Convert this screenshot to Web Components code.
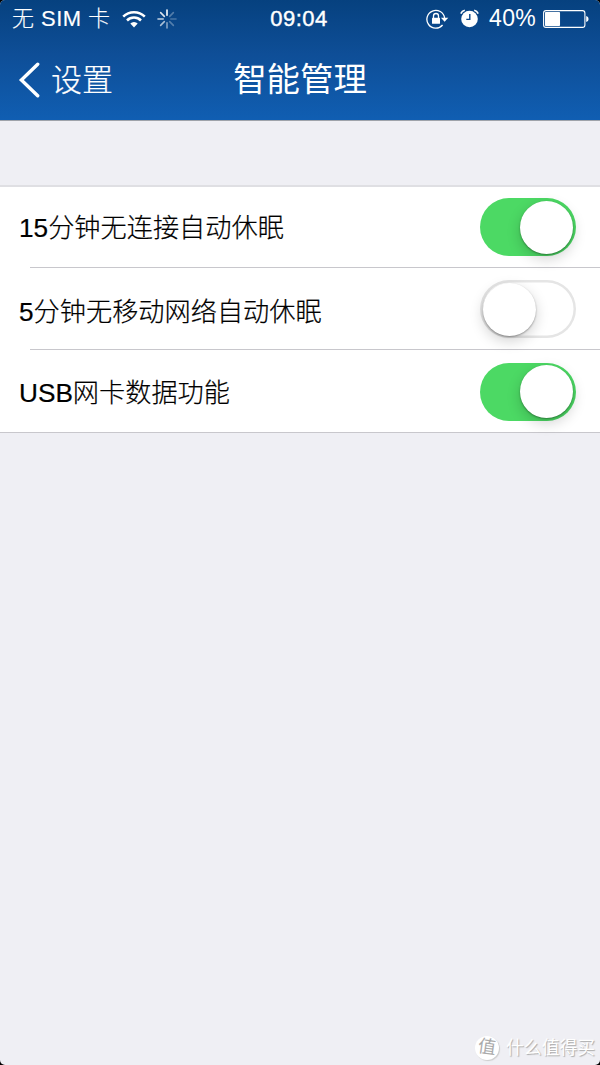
<!DOCTYPE html>
<html lang="zh-CN">
<head>
<meta charset="utf-8">
<title>智能管理</title>
<style>
    html { background: #000; }
    body {
        margin: 0;
        font-family: "Liberation Sans", "Noto Sans CJK SC", sans-serif;
        -webkit-font-smoothing: antialiased;
    }
</style>
</head>
<body>
<phone-screen>
    <status-bar slot="header" carrier="无 SIM 卡" time="09:04" battery="40"></status-bar>
    <nav-bar slot="header" back="设置">智能管理</nav-bar>
    <setting-list>
        <setting-row style="height:81px">15分钟无连接自动休眠<toggle-switch slot="control" checked></toggle-switch></setting-row>
        <setting-row style="height:83px;--text-shift:5px">5分钟无移动网络自动休眠<toggle-switch slot="control"></toggle-switch></setting-row>
        <setting-row style="height:82px;padding-top:1px">USB网卡数据功能<toggle-switch slot="control" checked></toggle-switch></setting-row>
    </setting-list>
    <water-mark slot="overlay" badge="值">什么值得买</water-mark>
</phone-screen>

<script>
class PhoneScreen extends HTMLElement {
    constructor() {
        super();
        this.attachShadow({ mode: 'open' }).innerHTML = `
            <style>
                :host { display: flex; flex-direction: column; position: relative; width: 600px; height: 1065px; overflow: hidden; border-radius: 5px; background: #efeff4; }
                header { height: 120px; box-sizing: content-box; border-bottom: 1px solid #9fa3aa; background: linear-gradient(#06417f, #0e4e97 45%, #105eb2); }
                main { padding-top: 64px; }
            </style>
            <header><slot name="header"></slot></header>
            <main><slot></slot></main>
            <slot name="overlay"></slot>
        `;
    }
}

class StatusBar extends HTMLElement {
    constructor() {
        super();
        this.attachShadow({ mode: 'open' });
    }

    connectedCallback() {
        const battery = parseInt(this.getAttribute('battery'));
        // spinner: the brightest ray is on top, the others fade
        const rays = [1, .3, .25, .3, .5, .65, .75, .85].map((o, i) =>
            `<path d="M10 1v5.2" opacity="${o}" transform="rotate(${i * 45} 10 10)"/>`
        ).join('');

        this.shadowRoot.innerHTML = `
            <style>
                :host { display: grid; grid-template-columns: 1fr auto 1fr; align-items: center; height: 37px; padding: 0 11px 2px 12px; color: #fff; font-size: 22px; line-height: 37px; }
                div { display: flex; align-items: center; }
                svg { display: block; flex: none; }
                .carrier { font-weight: 300; font-size: 22px; letter-spacing: .45px; width: 98px; white-space: nowrap; -webkit-text-stroke: .15px #fff; }
                .wifi { margin-left: 12px; }
                .spin { margin-left: 11px; }
                .time { font-size: 22px; letter-spacing: .45px; margin-right: 3px; -webkit-text-stroke: .4px #fff; }
                .right { justify-content: flex-end; }
                .alarm { margin-left: 11px; }
                .percent { margin-left: 10px; font-size: 23px; letter-spacing: .35px; width: 48px; white-space: nowrap; }
                .battery { margin-left: 6px; }
            </style>
            <div>
                <span class="carrier">${this.getAttribute('carrier')}</span>
                <svg class="wifi" width="24" height="18" viewBox="0 0 24 18" fill="none" stroke="#fff" stroke-width="2.5">
                    <path d="M1.2 6.6a15.3 15.3 0 0 1 21.6 0"/>
                    <path d="M5 10.5a9.9 9.9 0 0 1 14 0"/>
                    <path d="M12 17.4l-3.7-3.8a5.2 5.2 0 0 1 7.4 0z" fill="#fff" stroke="none"/>
                </svg>
                <svg class="spin" width="20" height="20" viewBox="0 0 20 20" stroke="#fff" stroke-width="1.6" stroke-linecap="round">${rays}</svg>
            </div>
            <span class="time">${this.getAttribute('time')}</span>
            <div class="right">
                <svg width="23" height="20" viewBox="0 0 23 20">
                    <path d="M18.6 9a8.9 8.9 0 1 0-2 7" fill="none" stroke="#fff" stroke-width="1.3"/>
                    <path d="M14.9 8.8h7.4l-3.7 4z" fill="#fff"/>
                    <rect x="6" y="8.8" width="8" height="6" rx=".6" fill="#fff"/>
                    <path d="M7.5 9V7a2.5 2.5 0 0 1 5 0v2" fill="none" stroke="#fff" stroke-width="1.3"/>
                </svg>
                <svg class="alarm" width="19" height="19" viewBox="0 0 19 19">
                    <circle cx="9.5" cy="10" r="8.3" fill="#fff"/>
                    <path d="M9.8 5v5.4H6.3" fill="none" stroke="#0a4689" stroke-width="1.4"/>
                    <path d="M.8 4.6Q2 1.8 4.8 1.2M18.2 4.6Q17 1.8 14.2 1.2" fill="none" stroke="#fff" stroke-width="1.6"/>
                </svg>
                <span class="percent">${battery}%</span>
                <svg class="battery" width="46" height="18" viewBox="0 0 46 18">
                    <rect x=".6" y=".6" width="41.3" height="16.8" rx="2.4" fill="none" stroke="#fff" stroke-width="1.1"/>
                    <rect x="2" y="2" width="${battery * .376}" height="14" rx=".8" fill="#fff"/>
                    <path d="M43.2 6q2.4.3 2.4 3t-2.4 3z" fill="#fff"/>
                </svg>
            </div>
        `;
    }
}

class NavBar extends HTMLElement {
    constructor() {
        super();
        this.attachShadow({ mode: 'open' });
    }

    connectedCallback() {
        this.shadowRoot.innerHTML = `
            <style>
                :host { display: grid; grid-template-columns: 1fr auto 1fr; align-items: center; height: 81px; padding: 0 18px; box-sizing: border-box; color: #fff; }
                .back { display: flex; align-items: center; font-size: 31px; font-weight: 300; line-height: 40px; -webkit-text-stroke: .2px #fff; }
                .back span { margin-left: 11px; padding-top: 2px; }
                h1 { margin: 0; font-size: 33.4px; font-weight: 400; line-height: 40px; }
            </style>
            <div class="back">
                <svg width="22" height="36" viewBox="0 0 22 36" fill="none" stroke="#fff" stroke-width="3.4" stroke-linecap="round"><path d="M19.7 2.3L3.4 18l16.3 15.7"/></svg>
                <span>${this.getAttribute('back')}</span>
            </div>
            <h1><slot></slot></h1>
        `;
    }
}

class SettingList extends HTMLElement {
    constructor() {
        super();
        this.attachShadow({ mode: 'open' }).innerHTML = `
            <style>
                :host { display: flex; flex-direction: column; border-top: 2px solid #dfdfe3; border-bottom: 1px solid #c8c7cc; background: #fff; box-sizing: border-box; height: 248px; }
            </style>
            <slot></slot>
        `;
    }
}

class SettingRow extends HTMLElement {
    constructor() {
        super();
        this.attachShadow({ mode: 'open' }).innerHTML = `
            <style>
                :host { display: flex; align-items: center; justify-content: space-between; box-sizing: border-box; padding: 0 24px 0 19px; font-size: 26.2px; font-weight: 300; line-height: 36px; color: #000; background: linear-gradient(#c8c7cc, #c8c7cc) 30px 100% / 600px 1px no-repeat; }
                :host(:last-of-type) { background: none; }
                span { padding-top: var(--text-shift, 2px); -webkit-text-stroke: .2px #000; }
            </style>
            <span><slot></slot></span>
            <slot name="control"></slot>
        `;
    }
}

class ToggleSwitch extends HTMLElement {
    constructor() {
        super();
        this.attachShadow({ mode: 'open' }).innerHTML = `
            <style>
                :host { display: flex; box-sizing: border-box; width: 96px; height: 58px; padding: 2.5px 3px; border-radius: 29px; background: #fff; box-shadow: inset 0 0 0 2.5px #e5e5e5; }
                :host([checked]) { justify-content: flex-end; background: #4cd964; box-shadow: none; }
                i { width: 53px; height: 53px; border-radius: 50%; background: #fff; box-shadow: 0 1px 2px rgba(0, 0, 0, .35), 0 5px 14px rgba(0, 0, 0, .18); }
            </style>
            <i></i>
        `;
        this.addEventListener('click', () => this.toggleAttribute('checked'));
    }
}

class WaterMark extends HTMLElement {
    constructor() {
        super();
        this.attachShadow({ mode: 'open' });
    }

    connectedCallback() {
        this.shadowRoot.innerHTML = `
            <style>
                :host { display: flex; align-items: center; position: absolute; right: 5px; bottom: 4px; height: 26px; color: #fff; font-size: 17.8px; line-height: 26px; text-shadow: 1px 1px 1px #aaa; }
                b { width: 24px; height: 24px; margin-right: 7px; border-radius: 50%; background: #fff; color: #aaa; font-size: 18px; font-weight: 400; line-height: 23px; text-align: center; text-shadow: none; box-shadow: 1px 1px 1px #ccc; }
                b span { display: block; transform: rotate(8deg); }
            </style>
            <b><span>${this.getAttribute('badge')}</span></b>
            <slot></slot>
        `;
    }
}

customElements.define('phone-screen', PhoneScreen);
customElements.define('status-bar', StatusBar);
customElements.define('nav-bar', NavBar);
customElements.define('setting-list', SettingList);
customElements.define('setting-row', SettingRow);
customElements.define('toggle-switch', ToggleSwitch);
customElements.define('water-mark', WaterMark);
</script>
</body>
</html>
